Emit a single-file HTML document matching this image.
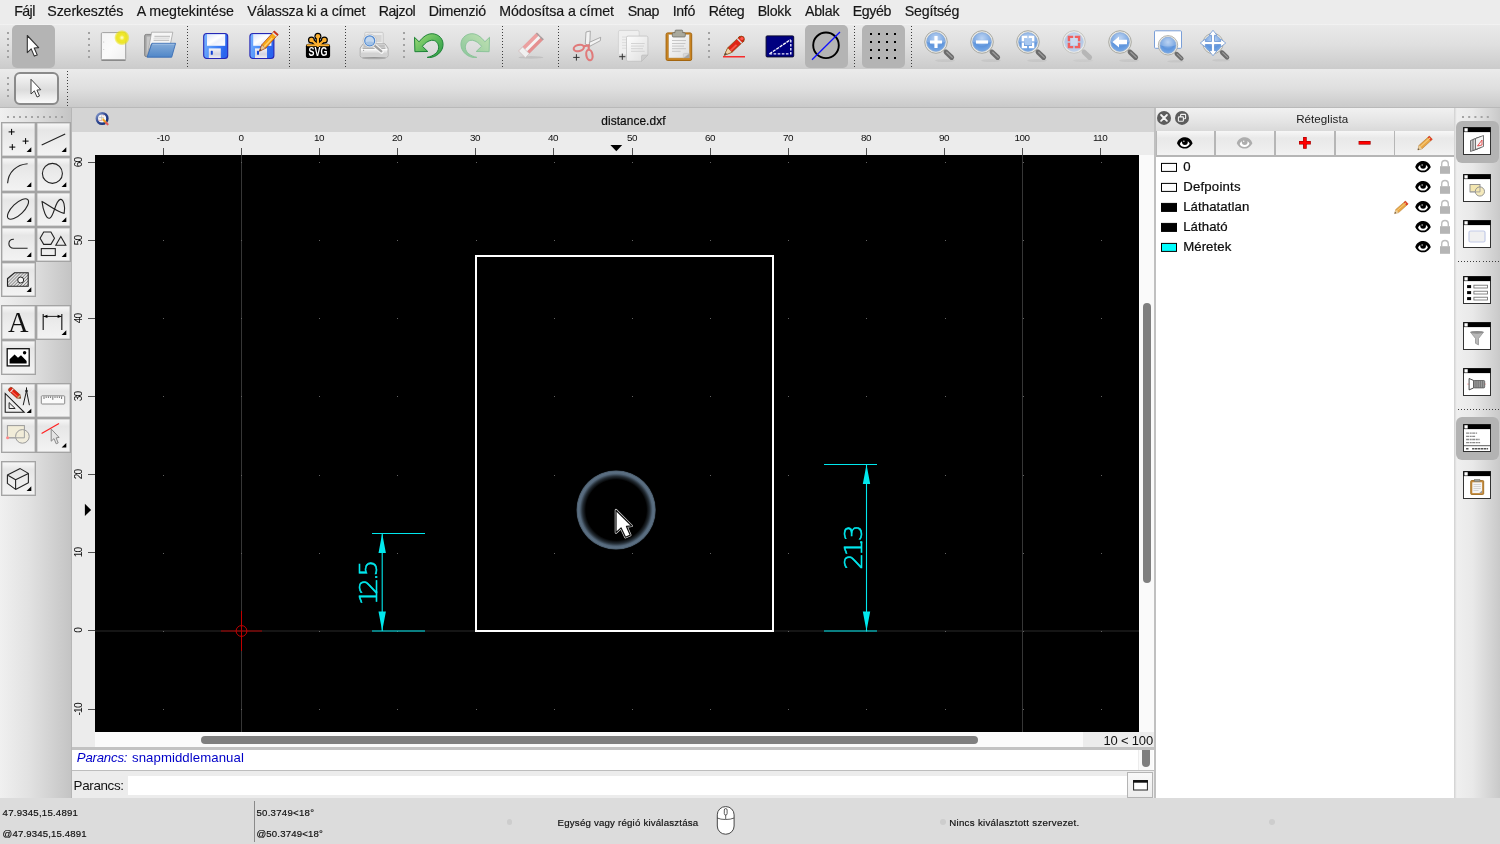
<!DOCTYPE html><html lang="hu"><head><meta charset="utf-8"><title>distance.dxf</title><style>
*{margin:0;padding:0;box-sizing:border-box}
html,body{width:1500px;height:844px;overflow:hidden;background:#ececec;font-family:"Liberation Sans",sans-serif;color:#000}
body{will-change:transform;position:relative}
.abs{position:absolute}
.t{position:absolute;white-space:nowrap}
svg{position:absolute;left:0;top:0;overflow:visible}
#menubar{position:absolute;left:0;top:0;width:1500px;height:24px;background:#ececec}
#menubar .t{color:#161616;-webkit-text-stroke:.18px #161616}
#tb1{position:absolute;left:0;top:24px;width:1500px;height:45px;background:linear-gradient(#f6f6f6 0,#e9e9e9 3%,#e0e0e0 45%,#cbcbcb 100%)}
#tb2{position:absolute;left:0;top:69px;width:1500px;height:39px;background:linear-gradient(#ebebeb,#dfdfdf 50%,#cacaca);border-bottom:1px solid #b9b9b9}
.selbg{position:absolute;background:#b4b4b4;border-radius:5px}
#leftp{position:absolute;left:0;top:108px;width:71px;height:690px;background:linear-gradient(90deg,#f0f0f0,#e2e2e2 40%,#c4c4c4)}
.tbtn{position:absolute;width:35px;height:35px;border:1px solid #a4a4a4;box-shadow:inset 0 0 0 .5px #b8b8b8;background:linear-gradient(#f7f7f7,#f2f2f2 8%,#e6e6e6 22%,#ececec 55%,#f3f3f3)}
#status{position:absolute;left:0;top:798px;width:1500px;height:46px;background:#dcdcdc}
#status .t{color:#111}
</style></head><body>
<div id="menubar">
<span class="t mi" style="left:14.3px;top:2.5px;font-size:14.2px;line-height:17px;letter-spacing:-0.620px;">Fájl</span>
<span class="t mi" style="left:47.3px;top:2.5px;font-size:14.2px;line-height:17px;letter-spacing:-0.122px;">Szerkesztés</span>
<span class="t mi" style="left:136.7px;top:2.5px;font-size:14.2px;line-height:17px;letter-spacing:0.015px;">A megtekintése</span>
<span class="t mi" style="left:247.3px;top:2.5px;font-size:14.2px;line-height:17px;letter-spacing:-0.228px;">Válassza ki a címet</span>
<span class="t mi" style="left:378.7px;top:2.5px;font-size:14.2px;line-height:17px;letter-spacing:-0.477px;">Rajzol</span>
<span class="t mi" style="left:428.7px;top:2.5px;font-size:14.2px;line-height:17px;letter-spacing:-0.236px;">Dimenzió</span>
<span class="t mi" style="left:499.3px;top:2.5px;font-size:14.2px;line-height:17px;letter-spacing:-0.077px;">Módosítsa a címet</span>
<span class="t mi" style="left:627.7px;top:2.5px;font-size:14.2px;line-height:17px;letter-spacing:-0.466px;">Snap</span>
<span class="t mi" style="left:672.7px;top:2.5px;font-size:14.2px;line-height:17px;letter-spacing:-0.346px;">Infó</span>
<span class="t mi" style="left:708.7px;top:2.5px;font-size:14.2px;line-height:17px;letter-spacing:-0.459px;">Réteg</span>
<span class="t mi" style="left:757.7px;top:2.5px;font-size:14.2px;line-height:17px;letter-spacing:-0.285px;">Blokk</span>
<span class="t mi" style="left:805.0px;top:2.5px;font-size:14.2px;line-height:17px;letter-spacing:-0.244px;">Ablak</span>
<span class="t mi" style="left:852.7px;top:2.5px;font-size:14.2px;line-height:17px;letter-spacing:-0.393px;">Egyéb</span>
<span class="t mi" style="left:904.7px;top:2.5px;font-size:14.2px;line-height:17px;letter-spacing:-0.182px;">Segítség</span>
</div>
<div id="tb1"></div><div id="tb2"></div>
<div class="selbg" style="left:12px;top:25px;width:43px;height:43px"></div>
<div class="selbg" style="left:805px;top:25px;width:43px;height:43px"></div>
<div class="selbg" style="left:862px;top:25px;width:43px;height:43px"></div>
<div class="abs" style="left:14px;top:72px;width:45px;height:33px;border:2px solid #8a8a8a;border-radius:6px;background:linear-gradient(#f6f6f6,#dcdcdc 55%,#fafafa)"></div>
<svg width="1500" height="110" viewBox="0 0 1500 110">
<defs>
<linearGradient id="gPaper" x1="0" y1="0" x2="1" y2="1"><stop offset="0" stop-color="#fdfdfd"/><stop offset="1" stop-color="#dedede"/></linearGradient>
<linearGradient id="gPaperL" x1="0" y1="0" x2="1" y2="1"><stop offset="0" stop-color="#f4f4f4"/><stop offset=".5" stop-color="#fbfbfb"/><stop offset="1" stop-color="#f0f0f0"/></linearGradient><linearGradient id="gFolder" x1="0" y1="0" x2="0" y2="1"><stop offset="0" stop-color="#86add9"/><stop offset="1" stop-color="#4f86c8"/></linearGradient>
<linearGradient id="gFloppy" x1="0" y1="0" x2="1" y2=".25"><stop offset="0" stop-color="#7db6ff"/><stop offset=".5" stop-color="#4a8cf8"/><stop offset="1" stop-color="#2a64ee"/></linearGradient><linearGradient id="gShut" x1="0" y1="0" x2="0" y2="1"><stop offset="0" stop-color="#f4f4f8"/><stop offset=".6" stop-color="#d4d4e0"/><stop offset="1" stop-color="#ececf2"/></linearGradient>
<linearGradient id="gLabel" x1="0" y1="0" x2="1" y2="1"><stop offset="0" stop-color="#dde4fa"/><stop offset=".45" stop-color="#ffffff"/><stop offset=".6" stop-color="#eef1fc"/><stop offset="1" stop-color="#ffffff"/></linearGradient>
<linearGradient id="gUndo" x1="0" y1="0" x2="0" y2="1"><stop offset="0" stop-color="#7fd07f"/><stop offset="1" stop-color="#1f8f2f"/></linearGradient>
<linearGradient id="gRedo" x1="0" y1="0" x2="0" y2="1"><stop offset="0" stop-color="#cfe9cf"/><stop offset="1" stop-color="#8fc79a"/></linearGradient>
<radialGradient id="gLens" cx=".5" cy=".3" r=".8"><stop offset="0" stop-color="#a9c8f0"/><stop offset=".55" stop-color="#5f95dc"/><stop offset="1" stop-color="#7fb0ea"/></radialGradient>
<radialGradient id="gLensF" cx=".5" cy=".3" r=".8"><stop offset="0" stop-color="#d3dff0"/><stop offset=".55" stop-color="#b4c8e6"/><stop offset="1" stop-color="#c4d6ee"/></radialGradient>
<radialGradient id="gGlow" cx=".5" cy=".5" r=".5"><stop offset="0" stop-color="#ffffe0"/><stop offset=".12" stop-color="#fbf8a0"/><stop offset=".35" stop-color="#f0e82a"/><stop offset=".68" stop-color="#ebe318" stop-opacity=".92"/><stop offset=".88" stop-color="#e8e000" stop-opacity=".45"/><stop offset="1" stop-color="#e8e000" stop-opacity="0"/></radialGradient>
<linearGradient id="gClip" x1="0" y1="0" x2="1" y2="1"><stop offset="0" stop-color="#c98a3a"/><stop offset="1" stop-color="#a86a1c"/></linearGradient>
<g id="arrowcur"><path d="M0,0 L0,17.1 L3.9,13.4 L7,20.6 L9.9,19.4 L6.9,12.5 L11.4,12.1 Z" fill="#fff" stroke="#333" stroke-width="1.1" stroke-linejoin="round"/></g>
<g id="mag"><ellipse cx="9" cy="18.6" rx="10" ry="1.5" fill="#000" opacity=".05"/><path d="M7,7 L11,10.8" stroke="#8a8a8a" stroke-width="2.6"/><path d="M10.2,10.2 L15.6,15.4" stroke="#6c6c6c" stroke-width="5" stroke-linecap="round"/><path d="M10.8,10.2 L16.2,15.4" stroke="#9c9c9c" stroke-width="1.3" stroke-linecap="round"/><circle r="11.3" fill="#e9e9e4" stroke="#a9a9a2" stroke-width="1"/><circle r="9.3" fill="url(#gLens)" stroke="#7fa3d6" stroke-width=".8"/><path d="M-9,0 A9,9 0 0 1 9,0 Q0,3 -9,0Z" fill="#fff" opacity=".22"/></g>
<g id="magF"><ellipse cx="9" cy="18.6" rx="10" ry="1.5" fill="#000" opacity=".03"/><path d="M7,7 L11,10.8" stroke="#c4c4c4" stroke-width="2.6"/><path d="M10.2,10.2 L15.6,15.4" stroke="#b6b6b6" stroke-width="5" stroke-linecap="round"/><circle r="11.3" fill="#ebebe8" stroke="#c4c4c0" stroke-width="1"/><circle r="9.3" fill="url(#gLensF)" stroke="#b9cce6" stroke-width=".8"/></g>
</defs>
<rect x="7" y="32" width="2" height="2" fill="#a2a2a2"/>
<rect x="7" y="38" width="2" height="2" fill="#a2a2a2"/>
<rect x="7" y="44" width="2" height="2" fill="#a2a2a2"/>
<rect x="7" y="50" width="2" height="2" fill="#a2a2a2"/>
<rect x="7" y="56" width="2" height="2" fill="#a2a2a2"/>
<rect x="88" y="32" width="2" height="2" fill="#a2a2a2"/>
<rect x="88" y="38" width="2" height="2" fill="#a2a2a2"/>
<rect x="88" y="44" width="2" height="2" fill="#a2a2a2"/>
<rect x="88" y="50" width="2" height="2" fill="#a2a2a2"/>
<rect x="88" y="56" width="2" height="2" fill="#a2a2a2"/>
<rect x="403" y="32" width="2" height="2" fill="#a2a2a2"/>
<rect x="403" y="38" width="2" height="2" fill="#a2a2a2"/>
<rect x="403" y="44" width="2" height="2" fill="#a2a2a2"/>
<rect x="403" y="50" width="2" height="2" fill="#a2a2a2"/>
<rect x="403" y="56" width="2" height="2" fill="#a2a2a2"/>
<rect x="708" y="32" width="2" height="2" fill="#a2a2a2"/>
<rect x="708" y="38" width="2" height="2" fill="#a2a2a2"/>
<rect x="708" y="44" width="2" height="2" fill="#a2a2a2"/>
<rect x="708" y="50" width="2" height="2" fill="#a2a2a2"/>
<rect x="708" y="56" width="2" height="2" fill="#a2a2a2"/>
<rect x="7" y="77" width="2" height="2" fill="#a2a2a2"/>
<rect x="7" y="83" width="2" height="2" fill="#a2a2a2"/>
<rect x="7" y="89" width="2" height="2" fill="#a2a2a2"/>
<rect x="7" y="95" width="2" height="2" fill="#a2a2a2"/>
<rect x="187.0" y="26" width="1" height="1" fill="#3c3c3c"/>
<rect x="187.0" y="29" width="1" height="1" fill="#3c3c3c"/>
<rect x="187.0" y="32" width="1" height="1" fill="#3c3c3c"/>
<rect x="187.0" y="35" width="1" height="1" fill="#3c3c3c"/>
<rect x="187.0" y="38" width="1" height="1" fill="#3c3c3c"/>
<rect x="187.0" y="41" width="1" height="1" fill="#3c3c3c"/>
<rect x="187.0" y="44" width="1" height="1" fill="#3c3c3c"/>
<rect x="187.0" y="47" width="1" height="1" fill="#3c3c3c"/>
<rect x="187.0" y="51" width="1" height="1" fill="#3c3c3c"/>
<rect x="187.0" y="54" width="1" height="1" fill="#3c3c3c"/>
<rect x="187.0" y="57" width="1" height="1" fill="#3c3c3c"/>
<rect x="187.0" y="60" width="1" height="1" fill="#3c3c3c"/>
<rect x="187.0" y="63" width="1" height="1" fill="#3c3c3c"/>
<rect x="187.0" y="66" width="1" height="1" fill="#3c3c3c"/>
<rect x="289.0" y="26" width="1" height="1" fill="#3c3c3c"/>
<rect x="289.0" y="29" width="1" height="1" fill="#3c3c3c"/>
<rect x="289.0" y="32" width="1" height="1" fill="#3c3c3c"/>
<rect x="289.0" y="35" width="1" height="1" fill="#3c3c3c"/>
<rect x="289.0" y="38" width="1" height="1" fill="#3c3c3c"/>
<rect x="289.0" y="41" width="1" height="1" fill="#3c3c3c"/>
<rect x="289.0" y="44" width="1" height="1" fill="#3c3c3c"/>
<rect x="289.0" y="47" width="1" height="1" fill="#3c3c3c"/>
<rect x="289.0" y="51" width="1" height="1" fill="#3c3c3c"/>
<rect x="289.0" y="54" width="1" height="1" fill="#3c3c3c"/>
<rect x="289.0" y="57" width="1" height="1" fill="#3c3c3c"/>
<rect x="289.0" y="60" width="1" height="1" fill="#3c3c3c"/>
<rect x="289.0" y="63" width="1" height="1" fill="#3c3c3c"/>
<rect x="289.0" y="66" width="1" height="1" fill="#3c3c3c"/>
<rect x="345.0" y="26" width="1" height="1" fill="#3c3c3c"/>
<rect x="345.0" y="29" width="1" height="1" fill="#3c3c3c"/>
<rect x="345.0" y="32" width="1" height="1" fill="#3c3c3c"/>
<rect x="345.0" y="35" width="1" height="1" fill="#3c3c3c"/>
<rect x="345.0" y="38" width="1" height="1" fill="#3c3c3c"/>
<rect x="345.0" y="41" width="1" height="1" fill="#3c3c3c"/>
<rect x="345.0" y="44" width="1" height="1" fill="#3c3c3c"/>
<rect x="345.0" y="47" width="1" height="1" fill="#3c3c3c"/>
<rect x="345.0" y="51" width="1" height="1" fill="#3c3c3c"/>
<rect x="345.0" y="54" width="1" height="1" fill="#3c3c3c"/>
<rect x="345.0" y="57" width="1" height="1" fill="#3c3c3c"/>
<rect x="345.0" y="60" width="1" height="1" fill="#3c3c3c"/>
<rect x="345.0" y="63" width="1" height="1" fill="#3c3c3c"/>
<rect x="345.0" y="66" width="1" height="1" fill="#3c3c3c"/>
<rect x="502.0" y="26" width="1" height="1" fill="#3c3c3c"/>
<rect x="502.0" y="29" width="1" height="1" fill="#3c3c3c"/>
<rect x="502.0" y="32" width="1" height="1" fill="#3c3c3c"/>
<rect x="502.0" y="35" width="1" height="1" fill="#3c3c3c"/>
<rect x="502.0" y="38" width="1" height="1" fill="#3c3c3c"/>
<rect x="502.0" y="41" width="1" height="1" fill="#3c3c3c"/>
<rect x="502.0" y="44" width="1" height="1" fill="#3c3c3c"/>
<rect x="502.0" y="47" width="1" height="1" fill="#3c3c3c"/>
<rect x="502.0" y="51" width="1" height="1" fill="#3c3c3c"/>
<rect x="502.0" y="54" width="1" height="1" fill="#3c3c3c"/>
<rect x="502.0" y="57" width="1" height="1" fill="#3c3c3c"/>
<rect x="502.0" y="60" width="1" height="1" fill="#3c3c3c"/>
<rect x="502.0" y="63" width="1" height="1" fill="#3c3c3c"/>
<rect x="502.0" y="66" width="1" height="1" fill="#3c3c3c"/>
<rect x="558.0" y="26" width="1" height="1" fill="#3c3c3c"/>
<rect x="558.0" y="29" width="1" height="1" fill="#3c3c3c"/>
<rect x="558.0" y="32" width="1" height="1" fill="#3c3c3c"/>
<rect x="558.0" y="35" width="1" height="1" fill="#3c3c3c"/>
<rect x="558.0" y="38" width="1" height="1" fill="#3c3c3c"/>
<rect x="558.0" y="41" width="1" height="1" fill="#3c3c3c"/>
<rect x="558.0" y="44" width="1" height="1" fill="#3c3c3c"/>
<rect x="558.0" y="47" width="1" height="1" fill="#3c3c3c"/>
<rect x="558.0" y="51" width="1" height="1" fill="#3c3c3c"/>
<rect x="558.0" y="54" width="1" height="1" fill="#3c3c3c"/>
<rect x="558.0" y="57" width="1" height="1" fill="#3c3c3c"/>
<rect x="558.0" y="60" width="1" height="1" fill="#3c3c3c"/>
<rect x="558.0" y="63" width="1" height="1" fill="#3c3c3c"/>
<rect x="558.0" y="66" width="1" height="1" fill="#3c3c3c"/>
<rect x="854.0" y="26" width="1" height="1" fill="#3c3c3c"/>
<rect x="854.0" y="29" width="1" height="1" fill="#3c3c3c"/>
<rect x="854.0" y="32" width="1" height="1" fill="#3c3c3c"/>
<rect x="854.0" y="35" width="1" height="1" fill="#3c3c3c"/>
<rect x="854.0" y="38" width="1" height="1" fill="#3c3c3c"/>
<rect x="854.0" y="41" width="1" height="1" fill="#3c3c3c"/>
<rect x="854.0" y="44" width="1" height="1" fill="#3c3c3c"/>
<rect x="854.0" y="47" width="1" height="1" fill="#3c3c3c"/>
<rect x="854.0" y="51" width="1" height="1" fill="#3c3c3c"/>
<rect x="854.0" y="54" width="1" height="1" fill="#3c3c3c"/>
<rect x="854.0" y="57" width="1" height="1" fill="#3c3c3c"/>
<rect x="854.0" y="60" width="1" height="1" fill="#3c3c3c"/>
<rect x="854.0" y="63" width="1" height="1" fill="#3c3c3c"/>
<rect x="854.0" y="66" width="1" height="1" fill="#3c3c3c"/>
<rect x="911.0" y="26" width="1" height="1" fill="#3c3c3c"/>
<rect x="911.0" y="29" width="1" height="1" fill="#3c3c3c"/>
<rect x="911.0" y="32" width="1" height="1" fill="#3c3c3c"/>
<rect x="911.0" y="35" width="1" height="1" fill="#3c3c3c"/>
<rect x="911.0" y="38" width="1" height="1" fill="#3c3c3c"/>
<rect x="911.0" y="41" width="1" height="1" fill="#3c3c3c"/>
<rect x="911.0" y="44" width="1" height="1" fill="#3c3c3c"/>
<rect x="911.0" y="47" width="1" height="1" fill="#3c3c3c"/>
<rect x="911.0" y="51" width="1" height="1" fill="#3c3c3c"/>
<rect x="911.0" y="54" width="1" height="1" fill="#3c3c3c"/>
<rect x="911.0" y="57" width="1" height="1" fill="#3c3c3c"/>
<rect x="911.0" y="60" width="1" height="1" fill="#3c3c3c"/>
<rect x="911.0" y="63" width="1" height="1" fill="#3c3c3c"/>
<rect x="911.0" y="66" width="1" height="1" fill="#3c3c3c"/>
<rect x="67.0" y="71" width="1" height="1" fill="#3c3c3c"/>
<rect x="67.0" y="74" width="1" height="1" fill="#3c3c3c"/>
<rect x="67.0" y="77" width="1" height="1" fill="#3c3c3c"/>
<rect x="67.0" y="80" width="1" height="1" fill="#3c3c3c"/>
<rect x="67.0" y="83" width="1" height="1" fill="#3c3c3c"/>
<rect x="67.0" y="86" width="1" height="1" fill="#3c3c3c"/>
<rect x="67.0" y="89" width="1" height="1" fill="#3c3c3c"/>
<rect x="67.0" y="92" width="1" height="1" fill="#3c3c3c"/>
<rect x="67.0" y="96" width="1" height="1" fill="#3c3c3c"/>
<rect x="67.0" y="99" width="1" height="1" fill="#3c3c3c"/>
<rect x="67.0" y="102" width="1" height="1" fill="#3c3c3c"/>
<rect x="67.0" y="105" width="1" height="1" fill="#3c3c3c"/>
<use href="#arrowcur" transform="translate(27.3,35.5)"/>
<use href="#arrowcur" transform="translate(31,79.3) scale(.86)"/>
<g><rect x="101.3" y="32.6" width="24.4" height="27.2" rx="1.2" fill="url(#gPaperL)" stroke="#a0a0a0" stroke-width="1"/><path d="M101.4,60.3 h24.2" stroke="#808080" stroke-width="1.1"/><circle cx="103.8" cy="42" r=".45" fill="#999"/><circle cx="103.8" cy="49.4" r=".45" fill="#999"/><circle cx="121.9" cy="37.7" r="7.8" fill="url(#gGlow)"/></g>
<g><path d="M144.6,36 a1.6,1.6 0 0 1 1.6,-1.6 h6 l1.4,1.8 h15.4 v20.4 h-22.8 a1.6,1.6 0 0 1 -1.6,-1.6 z" fill="#a6a6a6" stroke="#787878" stroke-width=".8"/><path d="M146.6,36.4 h4.4 l-3,18 h-1.4 z" fill="#c8c8c8"/><path d="M151.6,32.2 h21.2 l-2.4,12 h-19.4 l-3.4,10.4 z" fill="#f6f6f6" stroke="#9c9c9c" stroke-width=".7" stroke-linejoin="round"/><path d="M154.4,36.5 h15.6 M153.6,40.3 h15.6" stroke="#c4c4c4" stroke-width="1.3"/><path d="M153.4,38.4 h16" stroke="#dedede" stroke-width="1"/><path d="M151.9,43.3 h23.7 l-3.9,13.9 h-24.6 z" fill="url(#gFolder)" stroke="#3b6eb4" stroke-width=".9" stroke-linejoin="round"/><path d="M152.6,44.3 h21.8" stroke="#a4c2e6" stroke-width=".8"/></g>
<g transform="translate(203,33)"><rect x=".7" y=".5" width="24" height="25" rx="3" fill="url(#gFloppy)" stroke="#2626b4" stroke-width="1.1"/><rect x="4" y="1.2" width="18.2" height="11.6" fill="url(#gLabel)"/><rect x="5.8" y="15.4" width="12" height="9.6" fill="url(#gShut)"/><rect x="7.8" y="17.8" width="2" height="4" rx=".6" fill="#1242d6"/></g>
<g transform="translate(249.2,33)"><rect x=".7" y=".5" width="24" height="25" rx="3" fill="url(#gFloppy)" stroke="#2626b4" stroke-width="1.1"/><rect x="4" y="1.2" width="18.2" height="11.6" fill="url(#gLabel)"/><rect x="5.8" y="15.4" width="12" height="9.6" fill="url(#gShut)"/><rect x="7.8" y="17.8" width="2" height="4" rx=".6" fill="#1242d6"/></g>
<path d="M259.40,51.20 L265.70,48.15 L278.12,34.55 L274.28,31.05 L261.86,44.65 Z" fill="#f8a818" stroke="#a03810" stroke-width=".7" stroke-linejoin="round"/><path d="M259.40,51.20 L265.70,48.15 L261.86,44.65 Z" fill="#e8c89a" stroke="#a03810" stroke-width=".5"/><path d="M259.40,51.20 L261.47,50.01 L260.40,49.03 Z" fill="#333"/><path d="M277.07,35.71 L278.12,34.55 L274.28,31.05 L273.23,32.20 Z" fill="#e03020" stroke="#a02010" stroke-width=".5" stroke-linejoin="round"/><path d="M276.02,36.86 L277.07,35.71 L273.23,32.20 L272.18,33.35 Z" fill="#e4e4e4"/><path d="M264.24,46.82 L272.28,38.02" stroke="#ffd070" stroke-width="1.46"/>
<g>
<path d="M317.9,45.6 L317.90,36.20" stroke="#000" stroke-width="4.6" stroke-linecap="round"/><circle cx="317.90" cy="36.20" r="3.5" fill="#000"/><path d="M317.9,45.6 L311.41,39.96" stroke="#000" stroke-width="4.6" stroke-linecap="round"/><circle cx="311.41" cy="39.96" r="3.5" fill="#000"/><path d="M317.9,45.6 L324.39,39.96" stroke="#000" stroke-width="4.6" stroke-linecap="round"/><circle cx="324.39" cy="39.96" r="3.5" fill="#000"/>
<rect x="305.9" y="43.7" width="24.2" height="14.3" rx="2.6" fill="#000"/>
<path d="M317.9,45.6 L317.90,36.20" stroke="#fbb030" stroke-width="2.2" stroke-linecap="round"/><circle cx="317.90" cy="36.20" r="2.3" fill="#fbb030"/><path d="M317.9,45.6 L311.41,39.96" stroke="#fbb030" stroke-width="2.2" stroke-linecap="round"/><circle cx="311.41" cy="39.96" r="2.3" fill="#fbb030"/><path d="M317.9,45.6 L324.39,39.96" stroke="#fbb030" stroke-width="2.2" stroke-linecap="round"/><circle cx="324.39" cy="39.96" r="2.3" fill="#fbb030"/>
<path d="M307.6,45.3 H328.4" stroke="#fbb030" stroke-width="1.9" stroke-linecap="round"/>
<text x="308.6" y="56.4" font-family="Liberation Sans, sans-serif" font-weight="bold" font-size="12" fill="#fff" textLength="18.8" lengthAdjust="spacingAndGlyphs">SVG</text></g>
<g><rect x="364.8" y="32.3" width="18.4" height="12.5" rx="1" fill="#ececec" stroke="#c2c2c2" stroke-width=".8"/><rect x="373" y="35" width="8.6" height="7" fill="#d6d6d6"/><path d="M363.2,43.8 h21.8 l3,4.2 v7.6 a1.6,1.6 0 0 1 -1.6,1.6 h-24.6 a1.6,1.6 0 0 1 -1.6,-1.6 v-7.6 z" fill="#e6e6e6" stroke="#a6a6a6" stroke-width=".9"/><path d="M361,49.6 h26.4" stroke="#fbfbfb" stroke-width="1.6"/><path d="M363.4,46 h21.4" stroke="#c0c0c0" stroke-width="2.4"/><path d="M362.6,48.2 h22.8" stroke="#8e8e8e" stroke-width=".9"/><circle cx="363.6" cy="50.2" r=".5" fill="#777"/><rect x="360.8" y="52.6" width="26.8" height="3.8" rx="1" fill="#d2d2d2"/><ellipse cx="374" cy="58.2" rx="12" ry="1.1" fill="#000" opacity=".2"/><path d="M374.6,45.6 L381.6,51.6" stroke="#f6f6f6" stroke-width="4.4" stroke-linecap="round"/><path d="M374.6,45.6 L381.4,51.4" stroke="#a0a0a0" stroke-width="2.2" stroke-linecap="round"/><circle cx="369.7" cy="40.8" r="6.7" fill="#f2f2f2" stroke="#bcbcbc" stroke-width=".7"/><circle cx="369.7" cy="40.8" r="5" fill="#c3d7ee" stroke="#4f88d0" stroke-width="1.2"/><path d="M365.2,42.4 A5,5 0 0 0 374.2,42.4 Q369.7,40.6 365.2,42.4Z" fill="#a2c2e6"/></g>
<defs><linearGradient id="gU2" x1="0" y1="0" x2="1" y2="1"><stop offset="0" stop-color="#a4dc78"/><stop offset=".5" stop-color="#5cba5c"/><stop offset="1" stop-color="#2a9a44"/></linearGradient><linearGradient id="gR2" x1="0" y1="0" x2="1" y2="1"><stop offset="0" stop-color="#c2e2b4"/><stop offset=".5" stop-color="#a6d4a6"/><stop offset="1" stop-color="#88c49a"/></linearGradient></defs>
<path d="M414.5,37.3 L414.9,51.7 L427.8,51.5 L422.4,46.3 C425,43 428,40.8 431.5,40.3 C436,39.8 438.8,43.5 438.6,47.8 C438.4,52.5 433.5,56 427.2,57.4 C434,58.4 440.5,54 442.5,48 C444.5,41.5 441,35.5 434.5,34 C428,32.6 423,36.8 419.1,41.8 Z" fill="url(#gU2)" stroke="#1d8236" stroke-width="1" stroke-linejoin="round"/>
<path d="M414.5,37.3 L414.9,51.7 L427.8,51.5 L422.4,46.3 C425,43 428,40.8 431.5,40.3 C436,39.8 438.8,43.5 438.6,47.8 C438.4,52.5 433.5,56 427.2,57.4 C434,58.4 440.5,54 442.5,48 C444.5,41.5 441,35.5 434.5,34 C428,32.6 423,36.8 419.1,41.8 Z" transform="translate(904,0) scale(-1,1)" fill="url(#gR2)" stroke="#8cc49a" stroke-width="1" stroke-linejoin="round"/>
<g opacity=".92"><ellipse cx="531" cy="57.4" rx="12.5" ry="1.3" fill="#000" opacity=".1"/><g transform="translate(522,54.3) rotate(-45)"><rect x="0" y="-4.75" width="25.9" height="9.5" rx=".6" fill="#e68a8a" stroke="#d8a8a8" stroke-width=".5"/><rect x="0" y="-4.75" width="25.9" height="3.4" fill="#ee9c9c"/><rect x="5.4" y="-1.5" width="20.5" height="3" fill="#f6f6f6"/><rect x="0" y="-4.75" width="5.6" height="9.5" fill="#f3f3f3" stroke="#c4c4c4" stroke-width=".6"/><rect x="24.5" y="-4.75" width="1.4" height="9.5" fill="#9c9c9c"/></g></g>
<g><path d="M585.3,44 L586,32 L590.3,31 L589.7,46 Z" fill="#f3f3f3" stroke="#8f8f8f" stroke-width=".7" stroke-linejoin="round"/><path d="M589.3,42.4 L600.7,37.3 L600.3,40.7 L589.7,46.3 Z" fill="#f3f3f3" stroke="#8f8f8f" stroke-width=".7" stroke-linejoin="round"/><ellipse cx="578.8" cy="48" rx="5.2" ry="3.1" transform="rotate(-14 578.8 48)" fill="none" stroke="#e07a7a" stroke-width="2.1"/><ellipse cx="589.4" cy="55" rx="3.1" ry="5.3" transform="rotate(-10 589.4 55)" fill="none" stroke="#e07a7a" stroke-width="2.1"/><path d="M583.6,46.4 L588.6,45.2 L588.8,50" fill="none" stroke="#e07a7a" stroke-width="2.2" stroke-linejoin="round"/><path d="M573.2,57.4 h6.4 M576.4,54.2 v6.4" stroke="#333" stroke-width="1"/></g>
<g><rect x="618.4" y="30.4" width="20.8" height="24.6" rx="1.6" fill="#efefef" stroke="#cfcfcf" stroke-width=".8"/><path d="M622,37h10M622,39.8h10M622,42.6h10M622,45.4h6M622,48.2h6" stroke="#dadada" stroke-width=".9"/><path d="M628,36.1 h18.4 a1.5,1.5 0 0 1 1.5,1.5 v17.4 l-6.4,6.3 h-13.5 a1.5,1.5 0 0 1 -1.5,-1.5 v-22.2 a1.5,1.5 0 0 1 1.5,-1.5 z" fill="url(#gPaper)" stroke="#c2c2c2" stroke-width=".8"/><path d="M647.9,55 l-6.4,6.3 v-5 a1.3,1.3 0 0 1 1.3,-1.3 z" fill="#cdcdcd" stroke="#b4b4b4" stroke-width=".5"/><path d="M631,43.5h13.7M631,46.1h13M631,48.7h12M631,51.3h13.7" stroke="#d0d0d0" stroke-width=".9"/><path d="M619.2,56.7 h6.2 M622.3,53.6 v6.2" stroke="#333" stroke-width="1"/></g>
<g><rect x="666.1" y="32.9" width="25.6" height="27.6" rx="1.6" fill="#c9831f" stroke="#a3650f" stroke-width="1"/><rect x="668.7" y="34.4" width="20.6" height="23.6" fill="url(#gPaper)" stroke="#b89868" stroke-width=".5"/><path d="M672,40.5h14M672,43.5h13.4M672,46.1h12M672,48.7h14M672,51.3h8.6" stroke="#c2c2c2" stroke-width=".9"/><path d="M689.3,53.4 v4.6 h-6 z" fill="#a4a4a4"/><path d="M683.3,58 v-3.6 a1,1 0 0 1 1,-1 h5 z" fill="#d8d8d8" stroke="#b0b0b0" stroke-width=".4"/><path d="M675,32.7 v-1.6 a1,1 0 0 1 1,-1 h5.7 a1,1 0 0 1 1,1 v1.6 h1.6 a1,1 0 0 1 1,1 v2.3 a1,1 0 0 1 -1,1 h-11 a1,1 0 0 1 -1,-1 v-2.3 a1,1 0 0 1 1,-1 z" fill="#a9a99d" stroke="#666660" stroke-width=".7"/></g>
<circle cx="741.3" cy="39.2" r="3.1" fill="#e81c10" stroke="#7a4a10" stroke-width=".7"/>
<path d="M724.30,55.30 L732.06,52.22 L743.73,41.15 L739.47,36.65 L727.79,47.72 Z" fill="#e02414" stroke="#7a4a10" stroke-width=".7" stroke-linejoin="round"/><path d="M724.30,55.30 L732.06,52.22 L727.79,47.72 Z" fill="#f0d4a8" stroke="#7a4a10" stroke-width=".5"/><path d="M724.30,55.30 L726.87,54.06 L725.67,52.80 Z" fill="#333"/><path d="M730.44,50.51 L736.49,44.77" stroke="#f45a48" stroke-width="1.74"/>
<circle cx="741.9" cy="38.5" r="1.6" fill="#ff5a50"/>
<path d="M737.2,38.4 L741.8,43.2" stroke="#d8d8d8" stroke-width="1.5"/>
<path d="M723,56.8 h22" stroke="#ff0000" stroke-width="1.2"/>
<g><rect x="766.1" y="35.9" width="27.6" height="21" rx="1" fill="#000080" stroke="#0a0a30" stroke-width="1"/><path d="M769.5,53.8 L790.6,39.6" stroke="#fff" stroke-width="1.3" stroke-dasharray="3.2 .9"/><path d="M769.5,53.9 H790.8 V40" stroke="#e8e8ff" stroke-width="1.4" fill="none" stroke-dasharray="2.6 1.5"/></g>
<g><circle cx="826" cy="45.3" r="12.8" fill="none" stroke="#000" stroke-width="1.9"/><path d="M812,59.8 L840,32" stroke="#1010ff" stroke-width="1.3"/></g>
<rect x="870" y="33" width="2" height="2" fill="#000"/>
<rect x="870" y="41" width="2" height="2" fill="#000"/>
<rect x="870" y="49" width="2" height="2" fill="#000"/>
<rect x="870" y="57" width="2" height="2" fill="#000"/>
<rect x="878" y="33" width="2" height="2" fill="#000"/>
<rect x="878" y="41" width="2" height="2" fill="#000"/>
<rect x="878" y="49" width="2" height="2" fill="#000"/>
<rect x="878" y="57" width="2" height="2" fill="#000"/>
<rect x="886" y="33" width="2" height="2" fill="#000"/>
<rect x="886" y="41" width="2" height="2" fill="#000"/>
<rect x="886" y="49" width="2" height="2" fill="#000"/>
<rect x="886" y="57" width="2" height="2" fill="#000"/>
<rect x="894" y="33" width="2" height="2" fill="#000"/>
<rect x="894" y="41" width="2" height="2" fill="#000"/>
<rect x="894" y="49" width="2" height="2" fill="#000"/>
<rect x="894" y="57" width="2" height="2" fill="#000"/>
<use href="#mag" x="936" y="42"/>
<use href="#mag" x="982" y="42"/>
<use href="#mag" x="1028" y="42"/>
<use href="#magF" x="1074" y="42"/>
<use href="#mag" x="1120" y="42"/>
<path d="M930,42 h12 M936,36 v12" stroke="#fff" stroke-width="3.2"/>
<path d="M976,42 h12" stroke="#fff" stroke-width="3.2"/>
<rect x="1025" y="38.8" width="6.4" height="6.4" fill="#a8c8f0"/><path d="M1022.9,41.199999999999996 v-4.3 h4.3 M1028.8,36.9 h4.3 v4.3 M1033.1,42.800000000000004 v4.3 h-4.3 M1027.2,47.1 h-4.3 v-4.3" fill="none" stroke="#fff" stroke-width="2.4"/>
<rect x="1071" y="38.8" width="6.4" height="6.4" fill="#ccdaf0"/><path d="M1068.9,41.199999999999996 v-4.3 h4.3 M1074.8,36.9 h4.3 v4.3 M1079.1,42.800000000000004 v4.3 h-4.3 M1073.2,47.1 h-4.3 v-4.3" fill="none" stroke="#f06060" stroke-width="2.4"/>
<path d="M1112.5,42 L1119,36.5 V39.8 H1127 V44.2 H1119 V47.5 Z" fill="#fff"/>
<rect x="1154.5" y="30.8" width="27" height="17.5" rx="1" fill="#fff" stroke="#7a9fd8" stroke-width="1"/>
<g transform="translate(1168,45.3) scale(.86)"><use href="#mag"/></g>
<g transform="translate(1213,43.5) scale(.9)"><use href="#mag"/></g>
<g fill="#fff" stroke="#5a8ad0" stroke-width=".7"><path d="M1213,30.3 l4,5 h-2.5 v6.2 h6.2 v-2.5 l5,4 l-5,4 v-2.5 h-6.2 v6.2 h2.5 l-4,5 l-4,-5 h2.5 v-6.2 h-6.2 v2.5 l-5,-4 l5,-4 v2.5 h6.2 v-6.2 h-2.5 z"/></g>
</svg>
<div id="leftp"></div>
<svg width="72" height="700" viewBox="0 108 72 700" style="top:108px">
<rect x="7" y="116" width="2" height="2" fill="#a4a4a4"/>
<rect x="13" y="116" width="2" height="2" fill="#a4a4a4"/>
<rect x="19" y="116" width="2" height="2" fill="#a4a4a4"/>
<rect x="25" y="116" width="2" height="2" fill="#a4a4a4"/>
<rect x="31" y="116" width="2" height="2" fill="#a4a4a4"/>
<rect x="37" y="116" width="2" height="2" fill="#a4a4a4"/>
<rect x="43" y="116" width="2" height="2" fill="#a4a4a4"/>
<rect x="49" y="116" width="2" height="2" fill="#a4a4a4"/>
<rect x="55" y="116" width="2" height="2" fill="#a4a4a4"/>
<rect x="61" y="116" width="2" height="2" fill="#a4a4a4"/>
</svg>
<div class="tbtn" style="left:1px;top:122px"><svg width="33" height="33" viewBox="0 0 33 33"><path d="M6.6,8.9h6M9.6,5.9v6 M20.6,18.1h6M23.6,15.1v6 M7.3,24.1h6M10.3,21.1v6" stroke="#000" stroke-width="1"/><path d="M29.3,24.3 V29 H24.6 Z" fill="#000"/></svg></div>
<div class="tbtn" style="left:36px;top:122px"><svg width="33" height="33" viewBox="0 0 33 33"><path d="M39.7,22 L63.2,11" transform="translate(-35,0)" stroke="#222" stroke-width="1.1" fill="none"/><path d="M29.3,24.3 V29 H24.6 Z" fill="#000"/></svg></div>
<div class="tbtn" style="left:1px;top:157px"><svg width="33" height="33" viewBox="0 0 33 33"><path d="M5.6,25.3 C6.2,13.8 14.5,6.6 25.6,5.7" stroke="#222" stroke-width="1.1" fill="none"/><path d="M29.3,24.3 V29 H24.6 Z" fill="#000"/></svg></div>
<div class="tbtn" style="left:36px;top:157px"><svg width="33" height="33" viewBox="0 0 33 33"><circle cx="15.4" cy="15.4" r="10" stroke="#222" stroke-width="1.1" fill="none"/><path d="M29.3,24.3 V29 H24.6 Z" fill="#000"/></svg></div>
<div class="tbtn" style="left:1px;top:192px"><svg width="33" height="33" viewBox="0 0 33 33"><ellipse cx="16" cy="16" rx="13.6" ry="5.6" transform="rotate(-44 16 16)" stroke="#222" stroke-width="1.1" fill="none"/><path d="M29.3,24.3 V29 H24.6 Z" fill="#000"/></svg></div>
<div class="tbtn" style="left:36px;top:192px"><svg width="33" height="33" viewBox="0 0 33 33"><path d="M5,8.4 C6,18 9.5,26 12.6,25.2 C17,24 18,8 23.2,6.4 C26.5,5.6 28.6,14 27.2,20.4 C20,19 10,11 5,8.4 Z" stroke="#222" stroke-width="1.1" fill="none" stroke-linejoin="round"/><path d="M29.3,24.3 V29 H24.6 Z" fill="#000"/></svg></div>
<div class="tbtn" style="left:1px;top:227px"><svg width="33" height="33" viewBox="0 0 33 33"><path d="M11.9,11.2 C5.2,10.8 5.2,20.4 11.9,20.2 H25.6" stroke="#222" stroke-width="1.1" fill="none"/><path d="M29.3,24.3 V29 H24.6 Z" fill="#000"/></svg></div>
<div class="tbtn" style="left:36px;top:227px"><svg width="33" height="33" viewBox="0 0 33 33"><polygon points="17.5,10.2 13.9,16.4 6.7,16.4 3.1,10.2 6.7,4.0 13.9,4.0" stroke="#222" stroke-width="1.1" fill="none"/><path d="M23.8,8.6 L28.8,17.3 H18.8 Z" stroke="#222" stroke-width="1.1" fill="none"/><rect x="4.3" y="20.6" width="14" height="6.9" stroke="#222" stroke-width="1.1" fill="none"/><path d="M29.3,24.3 V29 H24.6 Z" fill="#000"/></svg></div>
<div class="tbtn" style="left:1px;top:262px"><svg width="33" height="33" viewBox="0 0 33 33"><defs><pattern id="hat" width="2.2" height="2.2" patternUnits="userSpaceOnUse" patternTransform="rotate(-45)"><rect width="2.2" height="2.2" fill="#e0e0e0"/><line x1="0" y1="0" x2="2.2" y2="0" stroke="#555" stroke-width="1"/></pattern></defs><path d="M5.5,23.2 V15.6 L12.5,9.8 H26.2 V23.2 Z" fill="url(#hat)" stroke="#222" stroke-width="1.1"/><circle cx="18.7" cy="17" r="3" fill="#f4f4f4" stroke="#222" stroke-width="1"/><path d="M29.3,24.3 V29 H24.6 Z" fill="#000"/></svg></div>
<div class="tbtn" style="left:1px;top:305px"><span class="t" style="left:6.1px;top:-.2px;font-family:'Liberation Serif',serif;font-size:28.4px;line-height:33px;color:#111">A</span></div>
<div class="tbtn" style="left:36px;top:305px"><svg width="33" height="33" viewBox="0 0 33 33"><path d="M6.2,8 V24 M24.8,8 V24" stroke="#222" stroke-width="1.2"/><path d="M6.2,10.4 H24.8" stroke="#222" stroke-width="1"/><path d="M6.4,10.4 l4,-1.6 v3.2 z M24.6,10.4 l-4,-1.6 v3.2 z" fill="#000"/><path d="M29.3,24.3 V29 H24.6 Z" fill="#000"/></svg></div>
<div class="tbtn" style="left:1px;top:340px"><svg width="33" height="33" viewBox="0 0 33 33"><rect x="5.2" y="7.7" width="22" height="17.2" fill="#fff" stroke="#111" stroke-width="1.3"/><path d="M7.6,22.4 V18.2 L12.6,13.4 L16,16.8 L19,14.2 L24.6,20 V22.4 Z" fill="#000"/><circle cx="22.6" cy="11.7" r="1.7" fill="#000"/></svg></div>
<div class="tbtn" style="left:1px;top:383px"><svg width="33" height="33" viewBox="0 0 33 33"><path d="M3.2,9.4 V28.3 H22.2 Z" fill="none" stroke="#1a1a1a" stroke-width="1.05" stroke-linejoin="miter"/><path d="M7.1,18.6 V24.5 H13.2 Z" fill="none" stroke="#1a1a1a" stroke-width=".95"/><g transform="translate(18.5,14.2) rotate(-138.6)"><path d="M0,0 L3,-2.3 H13.4 a1.6,2.3 0 0 1 0,4.6 H3 Z" fill="#e02010" stroke="#7a3a10" stroke-width=".6"/><path d="M0,0 L3,-2.3 V2.3 Z" fill="#e8c090" stroke="#7a3a10" stroke-width=".4"/><path d="M0,0 L1.1,-.8 V.8 Z" fill="#222"/><path d="M3.2,-.7 H12" stroke="#ff6a58" stroke-width="1"/><path d="M11.6,-2.2 V2.2" stroke="#e8e8e8" stroke-width="1"/></g><path d="M24.5,3.4 V8 M24.3,7.6 L21.2,21.2 M24.7,7.6 L27.4,21.2" stroke="#1a1a1a" stroke-width="1" fill="none"/><circle cx="24.5" cy="7" r="1.3" fill="#1a1a1a"/><path d="M29.3,24.8 V29 H24.6 Z" fill="#000"/></svg></div>
<div class="tbtn" style="left:36px;top:383px"><svg width="33" height="33" viewBox="0 0 33 33"><rect x="4.3" y="11.8" width="23.4" height="8.2" rx=".8" fill="#fafafa" stroke="#8a8a8a" stroke-width="1"/><path d="M7,12.4v2.6M9.2,12.4v1.6M11.4,12.4v1.6M13.6,12.4v1.6M15.8,12.4v3.4M18,12.4v1.6M20.200000000000003,12.4v1.6M22.4,12.4v1.6M24.6,12.4v2.6" stroke="#505050" stroke-width=".8"/></svg></div>
<div class="tbtn" style="left:1px;top:418px"><svg width="33" height="33" viewBox="0 0 33 33"><rect x="5.4" y="6.6" width="17" height="12.2" fill="#f1ecd8" stroke="#9a9a9a" stroke-width="1"/><circle cx="20.4" cy="17.4" r="6.8" fill="#f1ecd8" fill-opacity=".8" stroke="#9a9a9a" stroke-width="1"/><path d="M5.4,18.8 H22.4 V11" fill="none" stroke="#a4a4a4" stroke-width="1"/><circle cx="5.6" cy="18.8" r="1.5" fill="#ff8888"/></svg></div>
<div class="tbtn" style="left:36px;top:418px"><svg width="33" height="33" viewBox="0 0 33 33"><path d="M4.6,14.6 L22,4.4" stroke="#ff2020" stroke-width="1.2"/><path d="M0,0 L0,12.2 L2.8,9.6 L5,14.8 L7,13.9 L4.9,8.9 L7.9,8.4 Z" transform="translate(14.2,10)" fill="#e4e4e4" stroke="#8a8a8a" stroke-width="1" stroke-linejoin="round"/><path d="M29.3,23.9 V28.6 H24.6 Z" fill="#000"/></svg></div>
<div class="tbtn" style="left:1px;top:461px"><svg width="33" height="33" viewBox="0 0 33 33"><path d="M5.4,14.8 L18.2,8.4 L26.4,13.2 L13.6,19.6 Z M5.4,14.8 V23.2 L13.6,29.2 V19.6 M13.6,29.2 L26.4,22.6 V13.2" transform="translate(0,-1.8)" fill="none" stroke="#222" stroke-width="1.1" stroke-linejoin="round"/><path d="M29.3,24.3 V29 H24.6 Z" fill="#000"/></svg></div>
<div class="abs" style="left:70.7px;top:108px;width:1.2px;height:690px;background:#b6b6b6"></div>
<div class="abs" style="left:72px;top:108px;width:1082px;height:24px;background:#d4d4d4"></div>
<span class="t " style="left:601.3px;top:113.5px;font-size:11.9px;line-height:14px;letter-spacing:0.066px;color:#0c0c0c;-webkit-text-stroke:.2px #0c0c0c">distance.dxf</span>
<div class="abs" style="left:72px;top:132px;width:1083px;height:23px;background:#ececec"></div>
<div class="abs" style="left:72px;top:132px;width:23px;height:616px;background:#ececec"></div>
<div class="abs" style="left:95px;top:155px;width:1044px;height:577px;background:#000"></div>
<div class="abs" style="left:1139px;top:155px;width:15px;height:577px;background:#fafafa"></div>
<div class="abs" style="left:95px;top:732px;width:988px;height:15px;background:#fafafa"></div>
<div class="abs" style="left:1083px;top:732px;width:72px;height:15px;background:#ececec"></div>
<div class="abs" style="left:201px;top:736px;width:777px;height:8px;border-radius:4px;background:#7f7f7f"></div>
<div class="abs" style="left:1143px;top:303px;width:8px;height:279.5px;border-radius:4px;background:#7f7f7f"></div>
<span class="t " style="left:1103.4px;top:733.0px;font-size:13px;line-height:15px;letter-spacing:-0.171px;color:#111">10 &lt; 100</span>
<svg width="1500" height="844" viewBox="0 0 1500 844">
<line x1="163.5" y1="148" x2="163.5" y2="155" stroke="#505050" stroke-width="1"/>
<text x="163.1" y="140.9" font-size="9.9" text-anchor="middle" fill="#111" font-family="Liberation Sans, sans-serif" letter-spacing="-.5">-10</text>
<line x1="241.5" y1="148" x2="241.5" y2="155" stroke="#505050" stroke-width="1"/>
<text x="241.1" y="140.9" font-size="9.9" text-anchor="middle" fill="#111" font-family="Liberation Sans, sans-serif" letter-spacing="-.5">0</text>
<line x1="319.5" y1="148" x2="319.5" y2="155" stroke="#505050" stroke-width="1"/>
<text x="319.1" y="140.9" font-size="9.9" text-anchor="middle" fill="#111" font-family="Liberation Sans, sans-serif" letter-spacing="-.5">10</text>
<line x1="397.5" y1="148" x2="397.5" y2="155" stroke="#505050" stroke-width="1"/>
<text x="397.1" y="140.9" font-size="9.9" text-anchor="middle" fill="#111" font-family="Liberation Sans, sans-serif" letter-spacing="-.5">20</text>
<line x1="475.5" y1="148" x2="475.5" y2="155" stroke="#505050" stroke-width="1"/>
<text x="475.1" y="140.9" font-size="9.9" text-anchor="middle" fill="#111" font-family="Liberation Sans, sans-serif" letter-spacing="-.5">30</text>
<line x1="553.5" y1="148" x2="553.5" y2="155" stroke="#505050" stroke-width="1"/>
<text x="553.1" y="140.9" font-size="9.9" text-anchor="middle" fill="#111" font-family="Liberation Sans, sans-serif" letter-spacing="-.5">40</text>
<line x1="632.5" y1="148" x2="632.5" y2="155" stroke="#505050" stroke-width="1"/>
<text x="632.1" y="140.9" font-size="9.9" text-anchor="middle" fill="#111" font-family="Liberation Sans, sans-serif" letter-spacing="-.5">50</text>
<line x1="710.5" y1="148" x2="710.5" y2="155" stroke="#505050" stroke-width="1"/>
<text x="710.1" y="140.9" font-size="9.9" text-anchor="middle" fill="#111" font-family="Liberation Sans, sans-serif" letter-spacing="-.5">60</text>
<line x1="788.5" y1="148" x2="788.5" y2="155" stroke="#505050" stroke-width="1"/>
<text x="788.1" y="140.9" font-size="9.9" text-anchor="middle" fill="#111" font-family="Liberation Sans, sans-serif" letter-spacing="-.5">70</text>
<line x1="866.5" y1="148" x2="866.5" y2="155" stroke="#505050" stroke-width="1"/>
<text x="866.1" y="140.9" font-size="9.9" text-anchor="middle" fill="#111" font-family="Liberation Sans, sans-serif" letter-spacing="-.5">80</text>
<line x1="944.5" y1="148" x2="944.5" y2="155" stroke="#505050" stroke-width="1"/>
<text x="944.1" y="140.9" font-size="9.9" text-anchor="middle" fill="#111" font-family="Liberation Sans, sans-serif" letter-spacing="-.5">90</text>
<line x1="1022.5" y1="148" x2="1022.5" y2="155" stroke="#505050" stroke-width="1"/>
<text x="1022.1" y="140.9" font-size="9.9" text-anchor="middle" fill="#111" font-family="Liberation Sans, sans-serif" letter-spacing="-.5">100</text>
<line x1="1100.5" y1="148" x2="1100.5" y2="155" stroke="#505050" stroke-width="1"/>
<text x="1100.1" y="140.9" font-size="9.9" text-anchor="middle" fill="#111" font-family="Liberation Sans, sans-serif" letter-spacing="-.5">110</text>
<line x1="88" y1="709.5" x2="95" y2="709.5" stroke="#505050" stroke-width="1"/>
<text transform="translate(82,709.4) rotate(-90)" font-size="10.2" text-anchor="middle" fill="#111" font-family="Liberation Sans, sans-serif" letter-spacing="-.8">-10</text>
<line x1="88" y1="630.5" x2="95" y2="630.5" stroke="#505050" stroke-width="1"/>
<text transform="translate(82,630.4) rotate(-90)" font-size="10.2" text-anchor="middle" fill="#111" font-family="Liberation Sans, sans-serif" letter-spacing="-.8">0</text>
<line x1="88" y1="552.5" x2="95" y2="552.5" stroke="#505050" stroke-width="1"/>
<text transform="translate(82,552.4) rotate(-90)" font-size="10.2" text-anchor="middle" fill="#111" font-family="Liberation Sans, sans-serif" letter-spacing="-.8">10</text>
<line x1="88" y1="474.5" x2="95" y2="474.5" stroke="#505050" stroke-width="1"/>
<text transform="translate(82,474.4) rotate(-90)" font-size="10.2" text-anchor="middle" fill="#111" font-family="Liberation Sans, sans-serif" letter-spacing="-.8">20</text>
<line x1="88" y1="396.5" x2="95" y2="396.5" stroke="#505050" stroke-width="1"/>
<text transform="translate(82,396.4) rotate(-90)" font-size="10.2" text-anchor="middle" fill="#111" font-family="Liberation Sans, sans-serif" letter-spacing="-.8">30</text>
<line x1="88" y1="318.5" x2="95" y2="318.5" stroke="#505050" stroke-width="1"/>
<text transform="translate(82,318.4) rotate(-90)" font-size="10.2" text-anchor="middle" fill="#111" font-family="Liberation Sans, sans-serif" letter-spacing="-.8">40</text>
<line x1="88" y1="240.5" x2="95" y2="240.5" stroke="#505050" stroke-width="1"/>
<text transform="translate(82,240.4) rotate(-90)" font-size="10.2" text-anchor="middle" fill="#111" font-family="Liberation Sans, sans-serif" letter-spacing="-.8">50</text>
<line x1="88" y1="162.5" x2="95" y2="162.5" stroke="#505050" stroke-width="1"/>
<text transform="translate(82,162.4) rotate(-90)" font-size="10.2" text-anchor="middle" fill="#111" font-family="Liberation Sans, sans-serif" letter-spacing="-.8">60</text>
<defs><linearGradient id="gQ" x1="0" y1="0" x2="1" y2="1"><stop offset="0" stop-color="#8ea0d0"/><stop offset=".45" stop-color="#2c4690"/><stop offset="1" stop-color="#182e74"/></linearGradient></defs>
<g><circle cx="102.1" cy="118.5" r="5.3" fill="#f6f6f6" stroke="url(#gQ)" stroke-width="2.5"/><path d="M99,117.6 h5 M101.6,115.4 v5.6" stroke="#b8b8b8" stroke-width=".7"/><path d="M98.6,120.2 l3,.4 M103,115.8 l1,-1" stroke="#e88" stroke-width=".7"/><path d="M102.4,118.8 L106.6,123.2" stroke="#f0a020" stroke-width="2.1"/><path d="M102.1,118.5 L103,119.4" stroke="#f6e0a0" stroke-width="1.8"/><path d="M106.2,122.8 L107.6,124.3" stroke="#e05858" stroke-width="2.1" stroke-linecap="round"/></g>
<path d="M610.4,145 h11.8 l-5.9,6.3 z" fill="#000"/>
<path d="M84.9,503.8 v12.3 l6.2,-6.15 z" fill="#000"/>
<line x1="241.5" y1="155" x2="241.5" y2="732" stroke="#363636" stroke-width="1"/>
<line x1="1022.5" y1="155" x2="1022.5" y2="732" stroke="#363636" stroke-width="1"/>
<line x1="95" y1="631" x2="1139" y2="631" stroke="#2b2b2b" stroke-width="1"/>
<rect x="163" y="709" width="1" height="1" fill="#626262"/>
<rect x="163" y="631" width="1" height="1" fill="#626262"/>
<rect x="163" y="553" width="1" height="1" fill="#626262"/>
<rect x="163" y="475" width="1" height="1" fill="#626262"/>
<rect x="163" y="396" width="1" height="1" fill="#626262"/>
<rect x="163" y="318" width="1" height="1" fill="#626262"/>
<rect x="163" y="240" width="1" height="1" fill="#626262"/>
<rect x="163" y="162" width="1" height="1" fill="#626262"/>
<rect x="241" y="709" width="1" height="1" fill="#626262"/>
<rect x="241" y="631" width="1" height="1" fill="#626262"/>
<rect x="241" y="553" width="1" height="1" fill="#626262"/>
<rect x="241" y="475" width="1" height="1" fill="#626262"/>
<rect x="241" y="396" width="1" height="1" fill="#626262"/>
<rect x="241" y="318" width="1" height="1" fill="#626262"/>
<rect x="241" y="240" width="1" height="1" fill="#626262"/>
<rect x="241" y="162" width="1" height="1" fill="#626262"/>
<rect x="319" y="709" width="1" height="1" fill="#626262"/>
<rect x="319" y="631" width="1" height="1" fill="#626262"/>
<rect x="319" y="553" width="1" height="1" fill="#626262"/>
<rect x="319" y="475" width="1" height="1" fill="#626262"/>
<rect x="319" y="396" width="1" height="1" fill="#626262"/>
<rect x="319" y="318" width="1" height="1" fill="#626262"/>
<rect x="319" y="240" width="1" height="1" fill="#626262"/>
<rect x="319" y="162" width="1" height="1" fill="#626262"/>
<rect x="397" y="709" width="1" height="1" fill="#626262"/>
<rect x="397" y="631" width="1" height="1" fill="#626262"/>
<rect x="397" y="553" width="1" height="1" fill="#626262"/>
<rect x="397" y="475" width="1" height="1" fill="#626262"/>
<rect x="397" y="396" width="1" height="1" fill="#626262"/>
<rect x="397" y="318" width="1" height="1" fill="#626262"/>
<rect x="397" y="240" width="1" height="1" fill="#626262"/>
<rect x="397" y="162" width="1" height="1" fill="#626262"/>
<rect x="476" y="709" width="1" height="1" fill="#626262"/>
<rect x="476" y="631" width="1" height="1" fill="#626262"/>
<rect x="476" y="553" width="1" height="1" fill="#626262"/>
<rect x="476" y="475" width="1" height="1" fill="#626262"/>
<rect x="476" y="396" width="1" height="1" fill="#626262"/>
<rect x="476" y="318" width="1" height="1" fill="#626262"/>
<rect x="476" y="240" width="1" height="1" fill="#626262"/>
<rect x="476" y="162" width="1" height="1" fill="#626262"/>
<rect x="554" y="709" width="1" height="1" fill="#626262"/>
<rect x="554" y="631" width="1" height="1" fill="#626262"/>
<rect x="554" y="553" width="1" height="1" fill="#626262"/>
<rect x="554" y="475" width="1" height="1" fill="#626262"/>
<rect x="554" y="396" width="1" height="1" fill="#626262"/>
<rect x="554" y="318" width="1" height="1" fill="#626262"/>
<rect x="554" y="240" width="1" height="1" fill="#626262"/>
<rect x="554" y="162" width="1" height="1" fill="#626262"/>
<rect x="632" y="709" width="1" height="1" fill="#626262"/>
<rect x="632" y="631" width="1" height="1" fill="#626262"/>
<rect x="632" y="553" width="1" height="1" fill="#626262"/>
<rect x="632" y="475" width="1" height="1" fill="#626262"/>
<rect x="632" y="396" width="1" height="1" fill="#626262"/>
<rect x="632" y="318" width="1" height="1" fill="#626262"/>
<rect x="632" y="240" width="1" height="1" fill="#626262"/>
<rect x="632" y="162" width="1" height="1" fill="#626262"/>
<rect x="710" y="709" width="1" height="1" fill="#626262"/>
<rect x="710" y="631" width="1" height="1" fill="#626262"/>
<rect x="710" y="553" width="1" height="1" fill="#626262"/>
<rect x="710" y="475" width="1" height="1" fill="#626262"/>
<rect x="710" y="396" width="1" height="1" fill="#626262"/>
<rect x="710" y="318" width="1" height="1" fill="#626262"/>
<rect x="710" y="240" width="1" height="1" fill="#626262"/>
<rect x="710" y="162" width="1" height="1" fill="#626262"/>
<rect x="788" y="709" width="1" height="1" fill="#626262"/>
<rect x="788" y="631" width="1" height="1" fill="#626262"/>
<rect x="788" y="553" width="1" height="1" fill="#626262"/>
<rect x="788" y="475" width="1" height="1" fill="#626262"/>
<rect x="788" y="396" width="1" height="1" fill="#626262"/>
<rect x="788" y="318" width="1" height="1" fill="#626262"/>
<rect x="788" y="240" width="1" height="1" fill="#626262"/>
<rect x="788" y="162" width="1" height="1" fill="#626262"/>
<rect x="866" y="709" width="1" height="1" fill="#626262"/>
<rect x="866" y="631" width="1" height="1" fill="#626262"/>
<rect x="866" y="553" width="1" height="1" fill="#626262"/>
<rect x="866" y="475" width="1" height="1" fill="#626262"/>
<rect x="866" y="396" width="1" height="1" fill="#626262"/>
<rect x="866" y="318" width="1" height="1" fill="#626262"/>
<rect x="866" y="240" width="1" height="1" fill="#626262"/>
<rect x="866" y="162" width="1" height="1" fill="#626262"/>
<rect x="945" y="709" width="1" height="1" fill="#626262"/>
<rect x="945" y="631" width="1" height="1" fill="#626262"/>
<rect x="945" y="553" width="1" height="1" fill="#626262"/>
<rect x="945" y="475" width="1" height="1" fill="#626262"/>
<rect x="945" y="396" width="1" height="1" fill="#626262"/>
<rect x="945" y="318" width="1" height="1" fill="#626262"/>
<rect x="945" y="240" width="1" height="1" fill="#626262"/>
<rect x="945" y="162" width="1" height="1" fill="#626262"/>
<rect x="1023" y="709" width="1" height="1" fill="#626262"/>
<rect x="1023" y="631" width="1" height="1" fill="#626262"/>
<rect x="1023" y="553" width="1" height="1" fill="#626262"/>
<rect x="1023" y="475" width="1" height="1" fill="#626262"/>
<rect x="1023" y="396" width="1" height="1" fill="#626262"/>
<rect x="1023" y="318" width="1" height="1" fill="#626262"/>
<rect x="1023" y="240" width="1" height="1" fill="#626262"/>
<rect x="1023" y="162" width="1" height="1" fill="#626262"/>
<rect x="1101" y="709" width="1" height="1" fill="#626262"/>
<rect x="1101" y="631" width="1" height="1" fill="#626262"/>
<rect x="1101" y="553" width="1" height="1" fill="#626262"/>
<rect x="1101" y="475" width="1" height="1" fill="#626262"/>
<rect x="1101" y="396" width="1" height="1" fill="#626262"/>
<rect x="1101" y="318" width="1" height="1" fill="#626262"/>
<rect x="1101" y="240" width="1" height="1" fill="#626262"/>
<rect x="1101" y="162" width="1" height="1" fill="#626262"/>
<path d="M241.5,611 V651" stroke="#c00000" stroke-width="1"/><path d="M221,631 H262" stroke="#b00000" stroke-width="1"/><circle cx="241.5" cy="631" r="5.4" fill="none" stroke="#c00000" stroke-width="1"/>
<rect x="476" y="256" width="297" height="375" fill="none" stroke="#fff" stroke-width="2"/>
<g stroke="#00e8ee" fill="#00e8ee" stroke-width="1.1"><line x1="372" y1="533.5" x2="425" y2="533.5"/><line x1="372" y1="631" x2="425" y2="631"/><line x1="382.2" y1="533.5" x2="382.2" y2="631"/><path d="M382.2,533.5 l-3.7,19.6 h7.4 z M382.2,631 l-3.7,-19.6 h7.4 z" stroke="none"/></g><text transform="translate(377,602.4) rotate(-90) scale(1.1,1)" x="-2.5 7.0 19.35 23.5" font-family="DejaVu Sans, DejaVu Sans Light, Liberation Sans, sans-serif" font-weight="200" font-size="24" fill="#00e8ee" stroke="#00e8ee" stroke-width=".55">12.5</text>
<g stroke="#00e8ee" fill="#00e8ee" stroke-width="1.1"><line x1="824" y1="464.5" x2="877" y2="464.5"/><line x1="824" y1="631" x2="877" y2="631"/><line x1="866.5" y1="464.5" x2="866.5" y2="631"/><path d="M866.5,464.5 l-3.7,19.6 h7.4 z M866.5,631 l-3.7,-19.6 h7.4 z" stroke="none"/></g><text transform="translate(861.8,567.8) rotate(-90) scale(1.1,1)" x="-1.7 10.4 19.4 24.2" font-family="DejaVu Sans, DejaVu Sans Light, Liberation Sans, sans-serif" font-weight="200" font-size="24" fill="#00e8ee" stroke="#00e8ee" stroke-width=".55">21.3</text>
<defs><radialGradient id="gRing" cx=".5" cy=".5" r=".5"><stop offset="0" stop-color="#4a5c6c" stop-opacity="0"/><stop offset=".76" stop-color="#4a5c6c" stop-opacity="0"/><stop offset=".84" stop-color="#4a5c6c" stop-opacity=".45"/><stop offset=".91" stop-color="#54677a" stop-opacity="1"/><stop offset=".955" stop-color="#5c7083" stop-opacity="1"/><stop offset=".985" stop-color="#4a5b6b" stop-opacity="1"/><stop offset="1" stop-color="#3a4854" stop-opacity=".6"/></radialGradient></defs>
<circle cx="616.1" cy="510" r="39.8" fill="url(#gRing)"/>
<g transform="translate(615.6,509.4)" stroke-linejoin="round"><path d="M.4,.8 L.4,23.2 L5.5,18.5 L9.9,27.8 L14.6,25.7 L10.9,17 L16,16.4 Z" fill="none" stroke="#e8e8e8" stroke-width="2.5"/><path d="M.4,.8 L.4,23.2 L5.5,18.5 L9.9,27.8 L14.6,25.7 L10.9,17 L16,16.4 Z" fill="#fff" stroke="#111" stroke-width="1.25"/></g>
</svg>
<div class="abs" style="left:72px;top:747px;width:1083px;height:2.5px;background:#c2c2c2"></div>
<div class="abs" style="left:72px;top:749.5px;width:1082px;height:20.5px;background:#fff"></div>
<div class="abs" style="left:1138px;top:749.5px;width:15px;height:20.5px;background:#fafafa;border-left:1px solid #ececec"></div>
<div class="abs" style="left:1142px;top:749.5px;width:8px;height:17.5px;border-radius:0 0 4px 4px;background:#7f7f7f"></div>
<div class="abs" style="left:72px;top:770px;width:1082px;height:1px;background:#bdbdbd"></div>
<span class="t " style="left:76.8px;top:749.8px;font-size:13.2px;line-height:15px;letter-spacing:-0.199px;color:#0000c8;font-style:italic">Parancs:</span>
<span class="t " style="left:132.0px;top:749.8px;font-size:13.2px;line-height:15px;letter-spacing:0.075px;color:#0000c8">snapmiddlemanual</span>
<div class="abs" style="left:72px;top:771px;width:1082px;height:27px;background:#ececec"></div>
<div class="abs" style="left:128px;top:775.5px;width:1000px;height:19px;background:#fff"></div>
<span class="t " style="left:73.6px;top:778.3px;font-size:13.4px;line-height:15px;letter-spacing:-0.348px;color:#111">Parancs:</span>
<div class="abs" style="left:1127px;top:772px;width:26px;height:26px;border:1px solid #b4b4b4;background:linear-gradient(#f8f8f8,#ececec)"><svg width="24" height="24" viewBox="0 0 24 24"><rect x="5.6" y="7.6" width="13.8" height="9.4" fill="#fff" stroke="#222" stroke-width="1"/><rect x="5.1" y="7.1" width="14.8" height="2.6" fill="#111"/></svg></div>
<div class="abs" style="left:1154px;top:108px;width:1.6px;height:690px;background:#c0c0c0"></div>
<div class="abs" style="left:1155.5px;top:108px;width:299px;height:23px;background:linear-gradient(#f1f1f1,#e4e4e4 60%,#d9d9d9)"></div>
<span class="t " style="left:1296.2px;top:112.3px;font-size:11.6px;line-height:14px;letter-spacing:0.042px;color:#1a1a1a">Réteglista</span>
<div class="abs" style="left:1155.5px;top:130.5px;width:299px;height:26.5px;background:#b6b6b6"></div>
<div class="abs" style="left:1156.5px;top:130.8px;width:57.6px;height:24px;background:linear-gradient(#f7f7f7,#e9e9e9 30%,#ededed 70%,#f3f3f3)"></div>
<div class="abs" style="left:1215.7px;top:130.8px;width:58.3px;height:24px;background:linear-gradient(#f7f7f7,#e9e9e9 30%,#ededed 70%,#f3f3f3)"></div>
<div class="abs" style="left:1275.6px;top:130.8px;width:58.3px;height:24px;background:linear-gradient(#f7f7f7,#e9e9e9 30%,#ededed 70%,#f3f3f3)"></div>
<div class="abs" style="left:1335.5px;top:130.8px;width:58.3px;height:24px;background:linear-gradient(#f7f7f7,#e9e9e9 30%,#ededed 70%,#f3f3f3)"></div>
<div class="abs" style="left:1395.4px;top:130.8px;width:58.3px;height:24px;background:linear-gradient(#f7f7f7,#e9e9e9 30%,#ededed 70%,#f3f3f3)"></div>
<div class="abs" style="left:1155.5px;top:157px;width:298.5px;height:641px;background:#fff"></div>
<svg width="1500" height="844" viewBox="0 0 1500 844">
<defs>
<g id="eye"><path d="M-7.8,.3 C-6.6,-4.2 -2.6,-6 .6,-5.8 C4,-5.6 6.6,-3.6 7.8,.2 C6.4,2.6 4.2,5.6 -.2,5.6 C-4.4,5.6 -6.4,3 -7.8,.3 Z" fill="#000"/><path d="M-4.9,1 C-4.2,-1.4 -2.4,-2.3 .2,-2.3 C2.8,-2.3 4.3,-1.4 4.9,.8 C4,2.9 2.4,3.9 0,3.9 C-2.6,3.9 -4.2,2.9 -4.9,1 Z" fill="#fff"/><circle cx=".1" cy="-.9" r="2.9" fill="#000"/><circle cx="-.9" cy="-1.7" r=".75" fill="#fff" opacity=".85"/></g>
<g id="eyeg"><path d="M-7.8,.3 C-6.6,-4.2 -2.6,-6 .6,-5.8 C4,-5.6 6.6,-3.6 7.8,.2 C6.4,2.6 4.2,5.6 -.2,5.6 C-4.4,5.6 -6.4,3 -7.8,.3 Z" fill="#adadad"/><path d="M-4.9,1 C-4.2,-1.4 -2.4,-2.3 .2,-2.3 C2.8,-2.3 4.3,-1.4 4.9,.8 C4,2.9 2.4,3.9 0,3.9 C-2.6,3.9 -4.2,2.9 -4.9,1 Z" fill="#fff"/><circle cx=".1" cy="-.9" r="2.9" fill="#adadad"/><circle cx="-.9" cy="-1.7" r=".75" fill="#fff" opacity=".85"/></g>
<g id="lock"><path d="M-3.3,-.3 V-3 A3.3,3.4 0 0 1 3.3,-3 V-.3" fill="none" stroke="#bdbdbd" stroke-width="1.4"/><rect x="-5" y="-.7" width="10" height="7.6" fill="#b5b5b5"/></g>
<g id="penc"><path d="M0,0 L1.2,-4.2 L10.8,-12.6 L13.6,-9.6 L4,-1 Z" fill="#e9a644" stroke="#a8702a" stroke-width=".5"/><path d="M0,0 L1.2,-4.2 L4,-1 Z" fill="#e8cfa0"/><path d="M0,0 L.5,-1.6 L1.5,-.5 Z" fill="#333"/><path d="M9.2,-11.2 L10.8,-12.6 L13.6,-9.6 L12,-8.2 Z" fill="#e03a2a"/><path d="M2.4,-3 L11.4,-10.8" stroke="#f6cc7a" stroke-width="1"/></g>
</defs>
<circle cx="1164" cy="117.9" r="7" fill="#5c5c5c"/><path d="M1161.1,115 l5.8,5.8 M1166.9,115 l-5.8,5.8" stroke="#f2f2f2" stroke-width="1.9" stroke-linecap="round"/>
<circle cx="1182" cy="117.9" r="7" fill="#5c5c5c"/><rect x="1180.6" y="114.4" width="5" height="4.4" rx=".8" fill="none" stroke="#f2f2f2" stroke-width="1.1"/><rect x="1178.4" y="116.9" width="5" height="4.4" rx=".8" fill="#5e5e5e" stroke="#f2f2f2" stroke-width="1.1"/>
<use href="#eye" x="1184.8" y="143"/>
<use href="#eyeg" x="1244.6" y="143"/>
<path d="M1299,142.8 h11.8 M1304.9,136.9 v11.8" stroke="#9a0000" stroke-width="3.6"/><path d="M1299.5,142.8 h10.8 M1304.9,137.4 v10.8" stroke="#ff0000" stroke-width="2.5"/>
<path d="M1358.6,142.8 h12" stroke="#9a0000" stroke-width="3.6"/><path d="M1359.1,142.8 h11" stroke="#ff0000" stroke-width="2.5"/>
<g transform="translate(1417.8,149.9) scale(1.07,1.1)"><use href="#penc"/></g>
<rect x="1161.5" y="163.4" width="15" height="8" fill="#fff" stroke="#000" stroke-width="1"/>
<use href="#eye" x="1423" y="166.7"/>
<use href="#lock" x="1445" y="166.9"/>
<rect x="1161.5" y="183.4" width="15" height="8" fill="#fff" stroke="#000" stroke-width="1"/>
<use href="#eye" x="1423" y="186.7"/>
<use href="#lock" x="1445" y="186.9"/>
<rect x="1161.5" y="203.4" width="15" height="8" fill="#000" stroke="#000" stroke-width="1"/>
<use href="#eye" x="1423" y="206.7"/>
<use href="#lock" x="1445" y="206.9"/>
<use href="#penc" x="1394.6" y="213.6"/>
<rect x="1161.5" y="223.4" width="15" height="8" fill="#000" stroke="#000" stroke-width="1"/>
<use href="#eye" x="1423" y="226.7"/>
<use href="#lock" x="1445" y="226.9"/>
<rect x="1161.5" y="243.4" width="15" height="8" fill="#00ffff" stroke="#000" stroke-width="1"/>
<use href="#eye" x="1423" y="246.7"/>
<use href="#lock" x="1445" y="246.9"/>
</svg>
<span class="t " style="left:1183.2px;top:158.8px;font-size:13.2px;line-height:15px;letter-spacing:-0.341px;color:#0c0c0c;-webkit-text-stroke:.22px #0c0c0c">0</span>
<span class="t " style="left:1183.2px;top:178.8px;font-size:13.2px;line-height:15px;letter-spacing:0.204px;color:#0c0c0c;-webkit-text-stroke:.22px #0c0c0c">Defpoints</span>
<span class="t " style="left:1183.2px;top:198.8px;font-size:13.2px;line-height:15px;letter-spacing:0.080px;color:#0c0c0c;-webkit-text-stroke:.22px #0c0c0c">Láthatatlan</span>
<span class="t " style="left:1183.2px;top:218.8px;font-size:13.2px;line-height:15px;letter-spacing:0.080px;color:#0c0c0c;-webkit-text-stroke:.22px #0c0c0c">Látható</span>
<span class="t " style="left:1183.2px;top:238.8px;font-size:13.2px;line-height:15px;letter-spacing:0.074px;color:#0c0c0c;-webkit-text-stroke:.22px #0c0c0c">Méretek</span>
<div class="abs" style="left:1454px;top:108px;width:46px;height:690px;background:linear-gradient(90deg,#d0d0d0,#efefef 6%,#e9e9e9 40%,#c9c9c9)"></div>
<div class="selbg" style="left:1456px;top:120.5px;width:43px;height:42.5px;background:#b3b3b3;border-radius:6px"></div>
<div class="selbg" style="left:1456px;top:417px;width:43px;height:42.5px;background:#b3b3b3;border-radius:6px"></div>
<svg width="1500" height="844" viewBox="0 0 1500 844">
<rect x="1462.0" y="116" width="2" height="2" fill="#a4a4a4"/>
<rect x="1468.2" y="116" width="2" height="2" fill="#a4a4a4"/>
<rect x="1474.4" y="116" width="2" height="2" fill="#a4a4a4"/>
<rect x="1480.6" y="116" width="2" height="2" fill="#a4a4a4"/>
<rect x="1486.8" y="116" width="2" height="2" fill="#a4a4a4"/>
<rect x="1458" y="261" width="1" height="1" fill="#3c3c3c"/>
<rect x="1461" y="261" width="1" height="1" fill="#3c3c3c"/>
<rect x="1464" y="261" width="1" height="1" fill="#3c3c3c"/>
<rect x="1467" y="261" width="1" height="1" fill="#3c3c3c"/>
<rect x="1470" y="261" width="1" height="1" fill="#3c3c3c"/>
<rect x="1473" y="261" width="1" height="1" fill="#3c3c3c"/>
<rect x="1476" y="261" width="1" height="1" fill="#3c3c3c"/>
<rect x="1479" y="261" width="1" height="1" fill="#3c3c3c"/>
<rect x="1483" y="261" width="1" height="1" fill="#3c3c3c"/>
<rect x="1486" y="261" width="1" height="1" fill="#3c3c3c"/>
<rect x="1489" y="261" width="1" height="1" fill="#3c3c3c"/>
<rect x="1492" y="261" width="1" height="1" fill="#3c3c3c"/>
<rect x="1495" y="261" width="1" height="1" fill="#3c3c3c"/>
<rect x="1498" y="261" width="1" height="1" fill="#3c3c3c"/>
<rect x="1458" y="409" width="1" height="1" fill="#3c3c3c"/>
<rect x="1461" y="409" width="1" height="1" fill="#3c3c3c"/>
<rect x="1464" y="409" width="1" height="1" fill="#3c3c3c"/>
<rect x="1467" y="409" width="1" height="1" fill="#3c3c3c"/>
<rect x="1470" y="409" width="1" height="1" fill="#3c3c3c"/>
<rect x="1473" y="409" width="1" height="1" fill="#3c3c3c"/>
<rect x="1476" y="409" width="1" height="1" fill="#3c3c3c"/>
<rect x="1479" y="409" width="1" height="1" fill="#3c3c3c"/>
<rect x="1483" y="409" width="1" height="1" fill="#3c3c3c"/>
<rect x="1486" y="409" width="1" height="1" fill="#3c3c3c"/>
<rect x="1489" y="409" width="1" height="1" fill="#3c3c3c"/>
<rect x="1492" y="409" width="1" height="1" fill="#3c3c3c"/>
<rect x="1495" y="409" width="1" height="1" fill="#3c3c3c"/>
<rect x="1498" y="409" width="1" height="1" fill="#3c3c3c"/>
<g transform="translate(1463.5,127.5)"><rect x="0" y="0" width="27" height="27" fill="#fff" stroke="#333" stroke-width="1"/><rect x="0" y="0" width="27" height="4.6" fill="#000"/><rect x=".9" y=".7" width="3.3" height="3.3" fill="#fff"/><g stroke="#555" stroke-width=".8"><path d="M7,13 l8,-3 v11 l-8,3 z" fill="#c8c8c8"/><path d="M9.5,12 l8,-3 v11 l-8,3 z" fill="#d8d8d8"/><path d="M12,11 l8,-3 v11 l-8,3 z" fill="#f4f4f4"/></g><path d="M14,18.5 l4.5,-6 v5 z" fill="none" stroke="#e03030" stroke-width=".8"/></g>
<g transform="translate(1463.5,174.5)"><rect x="0" y="0" width="27" height="27" fill="#fff" stroke="#333" stroke-width="1"/><rect x="0" y="0" width="27" height="4.6" fill="#000"/><rect x=".9" y=".7" width="3.3" height="3.3" fill="#fff"/><rect x="6.5" y="10" width="10" height="7.4" fill="#f3e6b0" stroke="#8a8a8a" stroke-width=".9"/><circle cx="16.4" cy="17" r="4.6" fill="#f3e6b0" fill-opacity=".85" stroke="#8a8a8a" stroke-width=".9"/><path d="M6.5,17.4 h10 v-5" fill="none" stroke="#a0a0a0" stroke-width=".8"/></g>
<g transform="translate(1463.5,220.5)"><rect x="0" y="0" width="27" height="27" fill="#fff" stroke="#333" stroke-width="1"/><rect x="0" y="0" width="27" height="4.6" fill="#000"/><rect x=".9" y=".7" width="3.3" height="3.3" fill="#fff"/><rect x="5.5" y="10.5" width="16" height="11" rx="1.5" fill="#f0f0f0" stroke="#c4cce8" stroke-width="1.2"/></g>
<g transform="translate(1463.5,276.5)"><rect x="0" y="0" width="27" height="27" fill="#fff" stroke="#333" stroke-width="1"/><rect x="0" y="0" width="27" height="4.6" fill="#000"/><rect x=".9" y=".7" width="3.3" height="3.3" fill="#fff"/><g fill="#000"><rect x="3.6" y="8.6" width="4" height="3"/><rect x="3.6" y="14.6" width="4" height="3"/><rect x="3.6" y="20.6" width="4" height="3"/></g><g fill="#fff" stroke="#666" stroke-width=".8"><rect x="10.4" y="8.7" width="13.6" height="2.8"/><rect x="10.4" y="14.7" width="13.6" height="2.8"/><rect x="10.4" y="20.7" width="13.6" height="2.8"/></g></g>
<g transform="translate(1463.5,322.5)"><rect x="0" y="0" width="27" height="27" fill="#fff" stroke="#333" stroke-width="1"/><rect x="0" y="0" width="27" height="4.6" fill="#000"/><rect x=".9" y=".7" width="3.3" height="3.3" fill="#fff"/><path d="M7,9.6 h13 l-5,6.4 v6.4 l-3,-1.6 v-4.8 z" fill="#b8b8b8" stroke="#8a8a8a" stroke-width=".7"/><ellipse cx="13.5" cy="9.8" rx="6.5" ry="1.4" fill="#8c8c8c"/></g>
<g transform="translate(1463.5,368.5)"><rect x="0" y="0" width="27" height="27" fill="#fff" stroke="#333" stroke-width="1"/><rect x="0" y="0" width="27" height="4.6" fill="#000"/><rect x=".9" y=".7" width="3.3" height="3.3" fill="#fff"/><path d="M3.6,15.6 h19" stroke="#ffb0b0" stroke-width="1"/><path d="M5.6,10 l4.6,2 v7.4 l-4.6,2 z" fill="#fff" stroke="#333" stroke-width=".9"/><rect x="10.2" y="12" width="11" height="7.4" rx="1" fill="#9a9a9a" stroke="#555" stroke-width=".8"/><path d="M12.5,12v7.4M14.7,12v7.4M16.9,12v7.4M19.1,12v7.4" stroke="#666" stroke-width=".7"/></g>
<g transform="translate(1463.5,424.5)"><rect x="0" y="0" width="27" height="27" fill="#fff" stroke="#333" stroke-width="1"/><rect x="0" y="0" width="27" height="4.6" fill="#000"/><rect x=".9" y=".7" width="3.3" height="3.3" fill="#fff"/><path d="M2.6,8.6h11M2.6,11.8h9M2.6,15h13.5M2.6,18.2h14" stroke="#8a8a8a" stroke-width="1.3" stroke-dasharray="3 .6 2 .5"/><path d="M0,21.2 h27" stroke="#333" stroke-width=".8"/><path d="M2.6,24.2h2.4M8.6,24.2h16" stroke="#555" stroke-width="1.5" stroke-dasharray="2.4 .5"/></g>
<g transform="translate(1463.5,471.5)"><rect x="0" y="0" width="27" height="27" fill="#fff" stroke="#333" stroke-width="1"/><rect x="0" y="0" width="27" height="4.6" fill="#000"/><rect x=".9" y=".7" width="3.3" height="3.3" fill="#fff"/><rect x="7.2" y="9" width="13" height="14" rx="1" fill="#c48a3c" stroke="#9a6414" stroke-width=".8"/><rect x="8.8" y="10.8" width="9.8" height="10.8" fill="#f4f4f4"/><path d="M10,13h7.4M10,15h7.4M10,17h7.4M10,19h5" stroke="#c4c4c4" stroke-width=".7"/><rect x="11" y="7.8" width="5.4" height="2.4" fill="#9a9a92" stroke="#77776f" stroke-width=".5"/><path d="M18.6,19 v2.6 h-2.8 z" fill="#9a9a9a"/></g>
</svg>
<div id="status"></div>
<span class="t " style="left:2.6px;top:805.9px;font-size:9.6px;line-height:13px;letter-spacing:0.235px;color:#111;-webkit-text-stroke:.18px #111">47.9345,15.4891</span>
<span class="t " style="left:2.6px;top:826.5px;font-size:9.6px;line-height:13px;letter-spacing:0.149px;color:#111;-webkit-text-stroke:.18px #111">@47.9345,15.4891</span>
<span class="t " style="left:256.4px;top:805.9px;font-size:9.6px;line-height:13px;letter-spacing:0.289px;color:#111;-webkit-text-stroke:.18px #111">50.3749&lt;18°</span>
<span class="t " style="left:256.4px;top:826.5px;font-size:9.6px;line-height:13px;letter-spacing:0.169px;color:#111;-webkit-text-stroke:.18px #111">@50.3749&lt;18°</span>
<div class="abs" style="left:253.5px;top:801px;width:1px;height:41px;background:#8a8a8a"></div>
<span class="t " style="left:557.6px;top:816.1px;font-size:9.7px;line-height:13px;letter-spacing:0.189px;color:#111;-webkit-text-stroke:.18px #111">Egység vagy régió kiválasztása</span>
<span class="t " style="left:949.2px;top:816.1px;font-size:9.7px;line-height:13px;letter-spacing:0.296px;color:#111;-webkit-text-stroke:.18px #111">Nincs kiválasztott szervezet.</span>
<div class="abs" style="left:506.5px;top:819.2px;width:5.6px;height:5.6px;border-radius:3px;background:#cdcdcd"></div>
<div class="abs" style="left:940.0px;top:819.2px;width:5.6px;height:5.6px;border-radius:3px;background:#cdcdcd"></div>
<div class="abs" style="left:1269.4px;top:819.2px;width:5.6px;height:5.6px;border-radius:3px;background:#cdcdcd"></div>
<svg width="30" height="40" viewBox="0 0 30 40" style="left:711px;top:800px"><rect x="6.3" y="6.6" width="16.8" height="27.6" rx="8.2" fill="#fff" stroke="#333" stroke-width=".9"/><path d="M6.3,18 C10,20 19,20 23.1,18" fill="none" stroke="#333" stroke-width=".8"/><path d="M14.7,11.5 V19" stroke="#333" stroke-width=".8"/><rect x="13.3" y="8.6" width="2.8" height="6.4" rx="1.4" fill="#fff" stroke="#333" stroke-width=".8"/></svg>
</body></html>
